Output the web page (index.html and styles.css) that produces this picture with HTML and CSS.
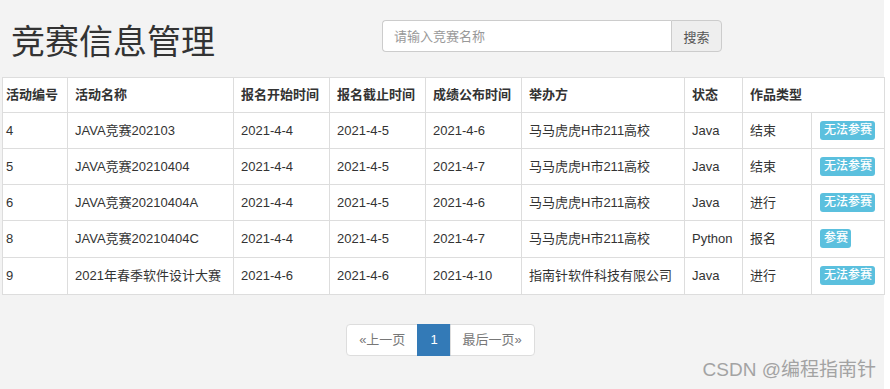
FILE: index.html
```html
<!DOCTYPE html>
<html lang="zh-CN">
<head>
  <meta charset="UTF-8">
  <title>竞赛信息管理</title>
  <link rel="stylesheet" href="styles.css">
</head>
<body>
  <div class="page">
    <div class="top">
      <h1 class="title">竞赛信息管理</h1>
      <form class="search" action="" method="get">
        <input type="text" name="name" placeholder="请输入竞赛名称">
        <button type="submit">搜索</button>
      </form>
    </div>

    <table class="list">
      <colgroup>
        <col class="c-id">
        <col class="c-name">
        <col class="c-date">
        <col class="c-date">
        <col class="c-date">
        <col class="c-org">
        <col class="c-state">
        <col class="c-type">
        <col class="c-op">
      </colgroup>
      <thead>
        <tr>
          <th class="first">活动编号</th>
          <th>活动名称</th>
          <th>报名开始时间</th>
          <th>报名截止时间</th>
          <th>成绩公布时间</th>
          <th>举办方</th>
          <th>状态</th>
          <th colspan="2">作品类型</th>
        </tr>
      </thead>
      <tbody>
        <tr>
          <td class="first">4</td>
          <td>JAVA竞赛202103</td>
          <td>2021-4-4</td>
          <td>2021-4-5</td>
          <td>2021-4-6</td>
          <td>马马虎虎H市211高校</td>
          <td>Java</td>
          <td>结束</td>
          <td><span class="label">无法参赛</span></td>
        </tr>
        <tr>
          <td class="first">5</td>
          <td>JAVA竞赛20210404</td>
          <td>2021-4-4</td>
          <td>2021-4-5</td>
          <td>2021-4-7</td>
          <td>马马虎虎H市211高校</td>
          <td>Java</td>
          <td>结束</td>
          <td><span class="label">无法参赛</span></td>
        </tr>
        <tr>
          <td class="first">6</td>
          <td>JAVA竞赛20210404A</td>
          <td>2021-4-4</td>
          <td>2021-4-5</td>
          <td>2021-4-6</td>
          <td>马马虎虎H市211高校</td>
          <td>Java</td>
          <td>进行</td>
          <td><span class="label">无法参赛</span></td>
        </tr>
        <tr>
          <td class="first">8</td>
          <td>JAVA竞赛20210404C</td>
          <td>2021-4-4</td>
          <td>2021-4-5</td>
          <td>2021-4-7</td>
          <td>马马虎虎H市211高校</td>
          <td>Python</td>
          <td>报名</td>
          <td><span class="label">参赛</span></td>
        </tr>
        <tr>
          <td class="first">9</td>
          <td>2021年春季软件设计大赛</td>
          <td>2021-4-6</td>
          <td>2021-4-6</td>
          <td>2021-4-10</td>
          <td>指南针软件科技有限公司</td>
          <td>Java</td>
          <td>进行</td>
          <td><span class="label">无法参赛</span></td>
        </tr>
      </tbody>
    </table>

    <ul class="pager">
      <li><a href="#">«上一页</a></li>
      <li class="active"><a href="#">1</a></li>
      <li><a href="#">最后一页»</a></li>
    </ul>

    <div class="mark">CSDN @编程指南针</div>
  </div>
</body>
</html>
```

FILE: styles.css
```css
body {
  margin: 0;
  background: #fff;
  font-family: "Liberation Sans", "Noto Sans CJK SC", sans-serif;
  font-size: 13px;
  color: #333;
}

.page {
  position: relative;
  width: 884px;
  height: 389px;
  background: #f3f3f3;
  padding-left: 2px;
  box-sizing: border-box;
}

.top {
  display: grid;
  grid-template-columns: 380px 340px;
  height: 77px;
}

.title {
  margin: 22px 0 0 9px;
  font-size: 34px;
  line-height: 40px;
  font-weight: normal;
  color: #333;
}

.search {
  display: flex;
  margin-top: 20px;
  height: 32px;
}

.search input {
  width: 289px;
  height: 32px;
  box-sizing: border-box;
  border: 1px solid #ccc;
  border-right: 0;
  border-radius: 4px 0 0 4px;
  padding: 0 11px;
  font-family: inherit;
  font-size: 13px;
  color: #555;
  background: #fff;
  outline: 0;
}

.search input::placeholder {
  color: #999;
}

.search button {
  width: 51px;
  height: 32px;
  border: 1px solid #ccc;
  border-radius: 0 4px 4px 0;
  background: #eee;
  color: #555;
  font-family: inherit;
  font-size: 13px;
  padding: 0;
}

.list {
  width: 882px;
  table-layout: fixed;
  border-collapse: collapse;
  background: #fff;
  border: 1px solid #ddd;
}

.c-id { width: 65px; }
.c-name { width: 166px; }
.c-date { width: 96px; }
.c-org { width: 163px; }
.c-state { width: 58px; }
.c-type { width: 69px; }
.c-op { width: 73px; }

.list th,
.list td {
  border: 1px solid #ddd;
  padding: 8px 7px;
  height: 19px;
  line-height: 19px;
  text-align: left;
  vertical-align: top;
  white-space: nowrap;
  overflow: hidden;
}

.list th {
  font-weight: bold;
  height: 18px;
  padding-top: 8px;
  padding-bottom: 8px;
  line-height: 18px;
}

.list tbody tr:nth-child(n+4) td {
  padding-bottom: 9px;
}

.list .first {
  padding-left: 3px;
  padding-right: 0;
}

.label {
  display: inline-block;
  vertical-align: top;
  background: #5bc0de;
  color: #fff;
  font-size: 12px;
  font-weight: 500;
  line-height: 13px;
  padding: 3px 3px 3px 4px;
  border-radius: 3px;
  margin-left: 1px;
}

.pager {
  display: flex;
  justify-content: center;
  list-style: none;
  margin: 29px 0 0;
  padding: 0 4px 0 0;
}

.pager a {
  display: block;
  height: 32px;
  line-height: 30px;
  box-sizing: border-box;
  padding: 0 12px;
  border: 1px solid #ddd;
  margin-left: -1px;
  background: #fff;
  color: #777;
  text-decoration: none;
}

.pager li:first-child a {
  border-radius: 4px 0 0 4px;
}

.pager li:last-child a {
  border-radius: 0 4px 4px 0;
}

.pager .active a {
  background: #337ab7;
  border-color: #337ab7;
  color: #fff;
}

.mark {
  position: absolute;
  right: 8px;
  bottom: 8px;
  font-size: 19px;
  color: #a3a3a3;
}
```
